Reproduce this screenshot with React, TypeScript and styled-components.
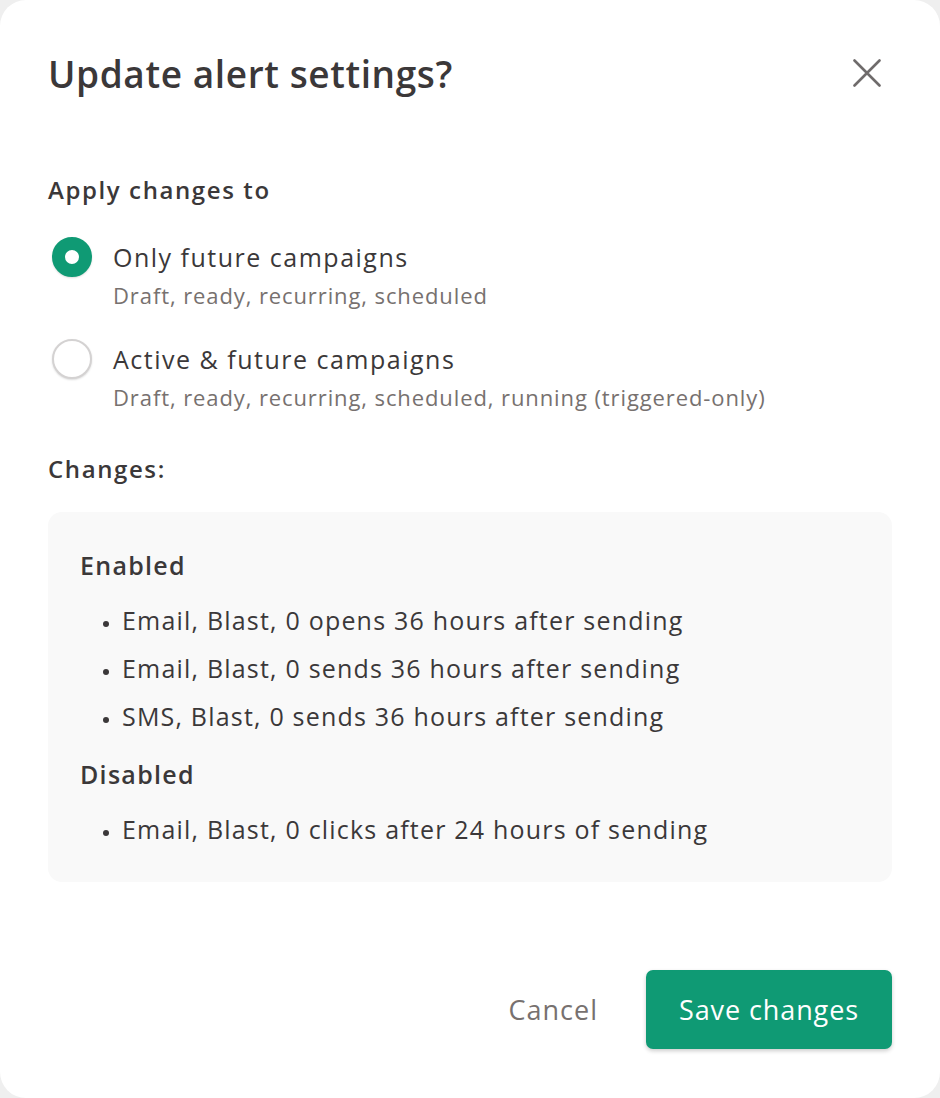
import React, { useState } from "react";
import styled, { createGlobalStyle } from "styled-components";

const GlobalStyle = createGlobalStyle`
  html, body {
    margin: 0;
    padding: 0;
    background: #efefef;
  }
  body {
    font-family: "Open Sans", "Noto Sans", "Liberation Sans", sans-serif;
    color: #3b3839;
  }
  * {
    box-sizing: border-box;
  }
`;

const GREEN = "#0f9a74";

const Modal = styled.div`
  width: 940px;
  min-height: 1098px;
  background: #ffffff;
  border-radius: 26px;
  padding: 44px 48px 49px 48px;
  display: flex;
  flex-direction: column;
`;

const Header = styled.div`
  display: flex;
  align-items: center;
  justify-content: space-between;
  height: 58px;
`;

const Title = styled.h2`
  margin: 0;
  font-size: 37px;
  font-weight: 600;
  letter-spacing: 0.6px;
  color: #3b3839;
`;

const CloseButton = styled.button`
  width: 44px;
  height: 44px;
  margin-right: 3px;
  border: none;
  background: transparent;
  padding: 0;
  display: flex;
  align-items: center;
  justify-content: center;
  cursor: pointer;
  color: #6f6b6b;
`;

const SectionLabel = styled.div<{ $top: number }>`
  margin-top: ${(p) => p.$top}px;
  font-size: 24px;
  line-height: 30px;
  font-weight: 600;
  letter-spacing: 1.6px;
  color: #3b3839;
`;

const Options = styled.div`
  display: flex;
  flex-direction: column;
  gap: 29px;
  margin-top: 32px;
`;

const Option = styled.label`
  display: grid;
  grid-template-columns: 40px 1fr;
  column-gap: 21px;
  padding-left: 4px;
  cursor: pointer;
`;

const RadioCircle = styled.span<{ $checked: boolean }>`
  width: 40px;
  height: 40px;
  border-radius: 50%;
  border: ${(p) => (p.$checked ? `13px solid ${GREEN}` : "2px solid #d4d2d2")};
  background: #ffffff;
  box-shadow: 0 1px 2px rgba(0, 0, 0, 0.14);
`;

const OptionText = styled.div`
  display: flex;
  flex-direction: column;
`;

const OptionTitle = styled.span`
  font-size: 25px;
  line-height: 40px;
  letter-spacing: 1.5px;
  color: #3b3839;
`;

const OptionHint = styled.span`
  margin-top: 3px;
  font-size: 22px;
  line-height: 30px;
  letter-spacing: 0.9px;
  color: #77716f;
`;

const ChangesBox = styled.div`
  margin-top: 28px;
  background: #f9f9f9;
  border-radius: 14px;
  padding: 37px 32px 29px 32px;
`;

const GroupTitle = styled.div<{ $top?: number }>`
  margin-top: ${(p) => p.$top ?? 0}px;
  font-size: 25px;
  line-height: 32px;
  font-weight: 600;
  letter-spacing: 1.3px;
  color: #3b3839;
`;

const List = styled.ul`
  margin: 15px 0 0 0;
  padding: 0 0 0 42px;
  list-style: disc;
`;

const Item = styled.li`
  font-size: 25px;
  line-height: 48px;
  letter-spacing: 1.2px;
  color: #3b3839;
  &::marker {
    font-size: 17px;
  }
`;

const Footer = styled.div`
  margin-top: auto;
  display: flex;
  justify-content: flex-end;
  align-items: center;
  gap: 48px;
`;

const TextButton = styled.button`
  border: none;
  background: transparent;
  font-family: inherit;
  font-size: 27px;
  letter-spacing: 1px;
  color: #77716f;
  cursor: pointer;
  padding: 0;
`;

const PrimaryButton = styled.button`
  width: 246px;
  height: 79px;
  border: none;
  border-radius: 7px;
  background: ${GREEN};
  color: #ffffff;
  font-family: inherit;
  font-size: 27px;
  letter-spacing: 0.9px;
  box-shadow: 0 2px 4px rgba(0, 0, 0, 0.2);
  cursor: pointer;
`;

const options = [
  {
    id: "future",
    title: "Only future campaigns",
    hint: "Draft, ready, recurring, scheduled",
  },
  {
    id: "active",
    title: "Active & future campaigns",
    hint: "Draft, ready, recurring, scheduled, running (triggered-only)",
  },
];

const enabled = [
  "Email, Blast, 0 opens 36 hours after sending",
  "Email, Blast, 0 sends 36 hours after sending",
  "SMS, Blast, 0 sends 36 hours after sending",
];

const disabled = ["Email, Blast, 0 clicks after 24 hours of sending"];

export default function App() {
  const [selected, setSelected] = useState("future");

  return (
    <>
      <GlobalStyle />
      <Modal>
        <Header>
          <Title>Update alert settings?</Title>
          <CloseButton aria-label="Close">
            <svg width="28" height="28" viewBox="0 0 28 28" fill="none">
              <path
                d="M1.5 1.5 L26.5 26.5 M26.5 1.5 L1.5 26.5"
                stroke="currentColor"
                strokeWidth="2.6"
                strokeLinecap="round"
              />
            </svg>
          </CloseButton>
        </Header>

        <SectionLabel $top={73}>Apply changes to</SectionLabel>
        <Options>
          {options.map((o) => (
            <Option key={o.id} onClick={() => setSelected(o.id)}>
              <RadioCircle $checked={selected === o.id} />
              <OptionText>
                <OptionTitle>{o.title}</OptionTitle>
                <OptionHint>{o.hint}</OptionHint>
              </OptionText>
            </Option>
          ))}
        </Options>

        <SectionLabel $top={42}>Changes:</SectionLabel>
        <ChangesBox>
          <GroupTitle>Enabled</GroupTitle>
          <List>
            {enabled.map((t) => (
              <Item key={t}>{t}</Item>
            ))}
          </List>
          <GroupTitle $top={18}>Disabled</GroupTitle>
          <List>
            {disabled.map((t) => (
              <Item key={t}>{t}</Item>
            ))}
          </List>
        </ChangesBox>

        <Footer>
          <TextButton>Cancel</TextButton>
          <PrimaryButton>Save changes</PrimaryButton>
        </Footer>
      </Modal>
    </>
  );
}
